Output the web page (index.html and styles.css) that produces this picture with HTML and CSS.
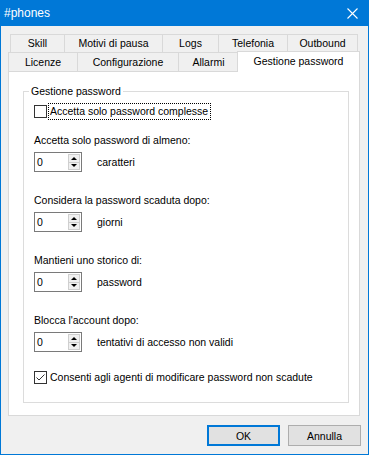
FILE: index.html
```html
<!DOCTYPE html>
<html lang="it">
<head>
<meta charset="utf-8">
<title>#phones</title>
<link rel="stylesheet" href="styles.css">
</head>
<body>
<div class="window">
  <div class="titlebar">
    <span class="title">#phones</span>
    <svg class="close" width="11" height="11" viewBox="0 0 11 11"><path d="M0.5 0.5 L10.5 10.5 M10.5 0.5 L0.5 10.5" stroke="#fff" stroke-width="1.1" fill="none"/></svg>
  </div>
  <div class="tabs">
    <div class="tabrow row1">
      <div class="tab t-skill">Skill</div>
      <div class="tab t-motivi">Motivi di pausa</div>
      <div class="tab t-logs">Logs</div>
      <div class="tab t-tel">Telefonia</div>
      <div class="tab t-out">Outbound</div>
    </div>
    <div class="tabrow row2">
      <div class="tab t-lic">Licenze</div>
      <div class="tab t-conf">Configurazione</div>
      <div class="tab t-all">Allarmi</div>
      <div class="tab selected">Gestione password</div>
    </div>
  </div>
  <div class="panel">
    <fieldset class="group">
      <legend>Gestione password</legend>
      <div class="check-row">
        <span class="checkbox"></span>
        <span class="check-label focus">Accetta solo password complesse</span>
      </div>
      <div class="field-label first">Accetta solo password di almeno:</div>
      <div class="spin-row">
        <div class="spin"><span class="spin-value">0</span><span class="spin-arrows"><span class="arrow up"></span><span class="arrow down"></span></span></div>
        <span class="spin-unit">caratteri</span>
      </div>
      <div class="field-label">Considera la password scaduta dopo:</div>
      <div class="spin-row">
        <div class="spin"><span class="spin-value">0</span><span class="spin-arrows"><span class="arrow up"></span><span class="arrow down"></span></span></div>
        <span class="spin-unit">giorni</span>
      </div>
      <div class="field-label">Mantieni uno storico di:</div>
      <div class="spin-row">
        <div class="spin"><span class="spin-value">0</span><span class="spin-arrows"><span class="arrow up"></span><span class="arrow down"></span></span></div>
        <span class="spin-unit">password</span>
      </div>
      <div class="field-label">Blocca l'account dopo:</div>
      <div class="spin-row">
        <div class="spin"><span class="spin-value">0</span><span class="spin-arrows"><span class="arrow up"></span><span class="arrow down"></span></span></div>
        <span class="spin-unit">tentativi di accesso non validi</span>
      </div>
      <div class="check-row last">
        <span class="checkbox checked"><svg width="11" height="11" viewBox="0 0 11 11"><path d="M1.5 5.5 L4 8 L9.5 2.5" stroke="#333" stroke-width="1" fill="none"/></svg></span>
        <span class="check-label">Consenti agli agenti di modificare password non scadute</span>
      </div>
    </fieldset>
  </div>
  <div class="buttons">
    <button class="btn default">OK</button>
    <button class="btn">Annulla</button>
  </div>
</div>
</body>
</html>
```
FILE: styles.css
```css
* { box-sizing: border-box; }
html, body { margin: 0; padding: 0; background: #fff; }
body {
  font-family: "Liberation Sans", Arial, sans-serif;
  font-size: 10.5px;
  color: #000;
}
.window {
  width: 369px;
  height: 455px;
  background: #f0f0f0;
  border: 1px solid #0078d7;
  border-top: 0;
  display: flex;
  flex-direction: column;
}
.titlebar {
  height: 26px;
  flex: none;
  background: #0078d7;
  color: #fff;
  font-size: 12px;
  display: flex;
  align-items: center;
  justify-content: space-between;
  padding: 0 10px 0 3px;
}
.close { display: block; }
.tabs { padding-top: 8px; }
.tabrow { display: flex; }
.row1 { margin-left: 9px; }
.row2 { margin-left: 7px; margin-top: -2px; align-items: flex-end; }
.tab {
  height: 19px;
  border: 1px solid #d9d9d9;
  background: #f0f0f0;
  display: flex;
  align-items: center;
  justify-content: center;
  line-height: 13px;
  white-space: nowrap;
}
.tab + .tab { margin-left: -1px; }
.row2 .tab { border-bottom: 0; }
.t-skill { width: 55px; }
.t-motivi { width: 99px; }
.t-logs { width: 57px; }
.t-tel { width: 70px; }
.t-out { width: 71px; }
.t-lic { width: 70px; }
.t-conf { width: 102px; }
.t-all { width: 61px; }
.row2 .tab.selected {
  width: 123px;
  height: 21px;
  margin-left: -2px;
  margin-bottom: -1px;
  background: #fff;
  position: relative;
  z-index: 1;
  padding-bottom: 2px;
}
.panel {
  margin: 0 8px 0 7px;
  background: #fff;
  border: 1px solid #d9d9d9;
}
.group {
  margin: 13px 10px 12px 14px;
  border: 1px solid #dcdcdc;
  padding: 5px 10px 16px 10px;
  min-width: 0;
}
.group legend {
  padding: 0 2px;
  margin-left: -5px;
  line-height: 13px;
}
.check-row {
  display: flex;
  align-items: center;
  height: 17px;
}
.check-row.last { margin-top: 17px; }
.checkbox {
  width: 13px;
  height: 13px;
  border: 1px solid #333;
  background: #fff;
  flex: none;
  display: flex;
}
.check-label {
  line-height: 13px;
  margin-left: 3px;
  white-space: nowrap;
}
.check-label.focus {
  border: 1px dotted #000;
  padding: 1px 2px 1px 1px;
  margin-left: 1px;
}
.field-label { line-height: 13px; margin-top: 22px; }
.field-label.first { margin-top: 14px; }
.spin-row {
  display: flex;
  align-items: center;
  margin-top: 5px;
}
.spin {
  width: 48px;
  height: 20px;
  border: 1px solid #7a7a7a;
  padding: 1px;
  display: flex;
  background: #fff;
}
.spin-value { flex: 1; padding-left: 1px; line-height: 16px; }
.spin-arrows {
  width: 12px;
  display: flex;
  flex-direction: column;
}
.arrow {
  flex: 1;
  background: #f0f0f0;
  border: 1px solid #cfcfcf;
  display: flex;
  align-items: center;
  justify-content: center;
}
.arrow + .arrow { border-top: 0; }
.arrow::before {
  content: "";
  width: 0;
  height: 0;
  border-left: 3px solid transparent;
  border-right: 3px solid transparent;
}
.arrow.up::before { border-bottom: 3px solid #000; }
.arrow.down::before { border-top: 3px solid #000; }
.spin-unit { margin-left: 15px; line-height: 13px; }
.buttons {
  display: flex;
  justify-content: flex-end;
  gap: 8px;
  padding: 9px 7px 0 0;
}
.btn {
  width: 73px;
  height: 21px;
  background: #e1e1e1;
  border: 1px solid #adadad;
  font-family: "Liberation Sans", Arial, sans-serif;
  font-size: 10.5px;
  color: #000;
  padding: 0;
  margin: 0;
}
.btn.default { border: 2px solid #0078d7; }
```
